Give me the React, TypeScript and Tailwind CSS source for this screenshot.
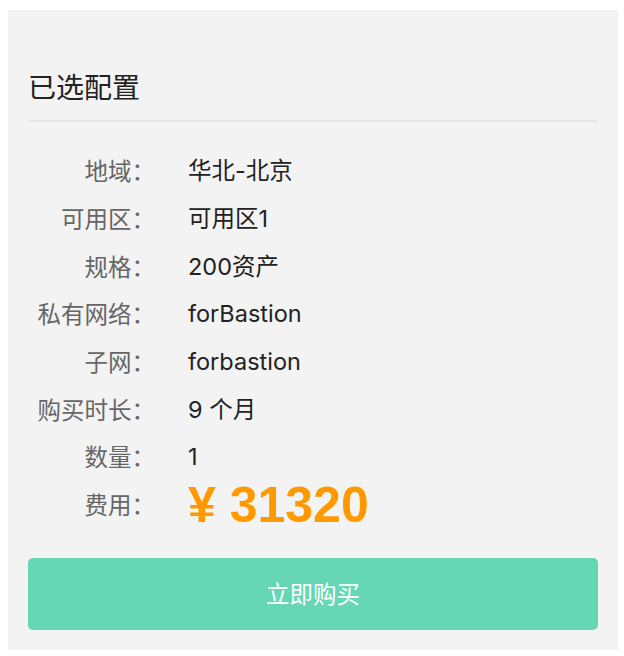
const rows = [
  { label: "地域：", value: "华北-北京" },
  { label: "可用区：", value: "可用区1" },
  { label: "规格：", value: "200资产" },
  { label: "私有网络：", value: "forBastion" },
  { label: "子网：", value: "forbastion" },
  { label: "购买时长：", value: "9 个月" },
  { label: "数量：", value: "1" },
];

const font = '"Inter", "Noto Sans CJK SC", sans-serif';

export default function App() {
  return (
    <div
      className="min-h-screen bg-white pt-[10px] px-[8px]"
      style={{ fontFamily: '"Noto Sans CJK SC", "Liberation Sans", sans-serif' }}
    >
      <div className="w-[610px] bg-[#f3f3f3] px-[20px] pt-[57px] pb-[20px]">
        <h2 className="pb-[15px] text-[28px] leading-[38px] text-[#222] border-b-2 border-[#e6e6e6]">
          已选配置
        </h2>

        <div className="mt-[25px]">
          {rows.map((row, i) => (
            <div key={i} className="flex items-center h-[47.7px]">
              <div className="w-[127px] text-right text-[23.5px] text-[#666]">{row.label}</div>
              <div className="ml-[33px] text-[23.5px] text-[#222]" style={{ fontFamily: font }}>
                {row.value}
              </div>
            </div>
          ))}
          <div className="flex items-center h-[48px]">
            <div className="w-[127px] text-right text-[23.5px] text-[#666]">费用：</div>
            <div
              className="ml-[33px] text-[50px] font-bold leading-none text-[#ff9900]"
              style={{ fontFamily: '"Liberation Sans", "Noto Sans CJK SC", sans-serif' }}
            >
              ¥ 31320
            </div>
          </div>
        </div>

        <button className="mt-[29px] w-full h-[72px] rounded-[5px] bg-[#66d7b5] text-white text-[23.5px]">
          立即购买
        </button>
      </div>
    </div>
  );
}
